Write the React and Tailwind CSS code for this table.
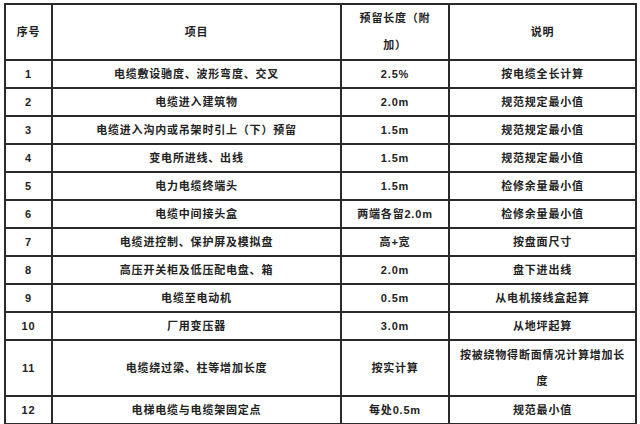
import React from "react";

const rows = [
  ["1", "电缆敷设驰度、波形弯度、交叉", "2.5%", "按电缆全长计算"],
  ["2", "电缆进入建筑物", "2.0m", "规范规定最小值"],
  ["3", "电缆进入沟内或吊架时引上（下）预留", "1.5m", "规范规定最小值"],
  ["4", "变电所进线、出线", "1.5m", "规范规定最小值"],
  ["5", "电力电缆终端头", "1.5m", "检修余量最小值"],
  ["6", "电缆中间接头盒", "两端各留2.0m", "检修余量最小值"],
  ["7", "电缆进控制、保护屏及模拟盘", "高+宽", "按盘面尺寸"],
  ["8", "高压开关柜及低压配电盘、箱", "2.0m", "盘下进出线"],
  ["9", "电缆至电动机", "0.5m", "从电机接线盒起算"],
  ["10", "厂用变压器", "3.0m", "从地坪起算"],
  ["11", "电缆绕过梁、柱等增加长度", "按实计算", "按被绕物得断面情况计算增加长度"],
  ["12", "电梯电缆与电缆架固定点", "每处0.5m", "规范最小值"],
];

export default function App() {
  const cell = "border-2 border-[#2a2a2a] text-center align-middle px-[8px] py-0 leading-[26px]";
  return (
    <div
      className="w-[640px] h-[424px] bg-white pl-[4px] pt-[3px] text-[#222] text-[11px] font-semibold tracking-[0.8px]"
      style={{ fontFamily: '"Liberation Sans", "Noto Sans CJK SC", sans-serif' }}
    >
      <table className="table-fixed border-collapse w-[632px]">
        <colgroup>
          <col className="w-[47px]" />
          <col className="w-[289px]" />
          <col className="w-[108px]" />
          <col className="w-[187px]" />
        </colgroup>
        <thead>
          <tr className="h-[54px]">
            <th className={cell + " font-semibold"}>序号</th>
            <th className={cell + " font-semibold"}>项目</th>
            <th className={cell + " font-semibold leading-[27px] px-[14px]"}>预留长度（附加）</th>
            <th className={cell + " font-semibold"}>说明</th>
          </tr>
        </thead>
        <tbody>
          {rows.map((r) => (
            <tr key={r[0]} className={r[0] === "11" ? "h-[56px]" : "h-[28px]"}>
              <td className={cell}>{r[0]}</td>
              <td className={cell}>{r[1]}</td>
              <td className={cell}>{r[2]}</td>
              <td className={cell}>{r[3]}</td>
            </tr>
          ))}
        </tbody>
      </table>
    </div>
  );
}
